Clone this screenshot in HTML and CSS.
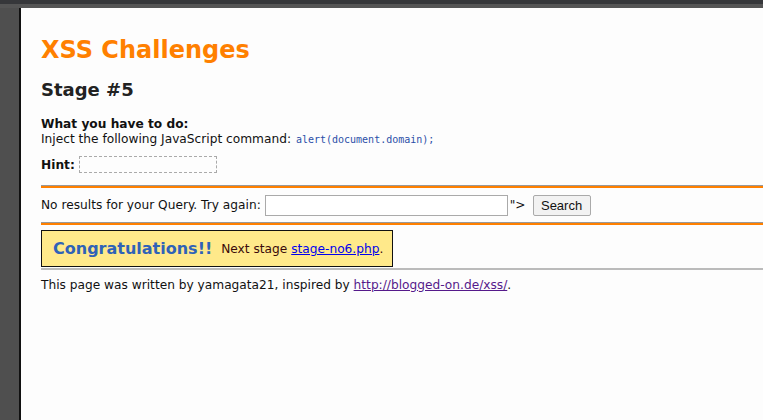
FILE: index.html
```html
<!DOCTYPE html>
<html>
<head>
<meta charset="utf-8">
<link rel="stylesheet" href="styles.css">
</head>
<body>
<div class="chrome-top"></div>
<div class="frame">
  <div class="side"></div>
  <div class="page">
    <h1 class="title">XSS Challenges</h1>
    <h2 class="stage">Stage #5</h2>
    <div class="task">
      <b>What you have to do:</b><br>
      Inject the following JavaScript command: <code class="cmd">alert(document.domain);</code>
    </div>
    <div class="hint"><b>Hint:</b> <span class="hintbox"></span></div>
    <div class="rule-red"></div>
    <form class="query">
      <span>No results for your Query. Try again:</span>
      <input class="qinput" type="text">
      <span class="tail">"&gt;</span>
      <button class="btn" type="button">Search</button>
    </form>
    <div class="rule-red"></div>
    <div class="congrats">
      <span class="big">Congratulations!!</span>
      <span class="next">Next stage <a href="#">stage-no6.php</a>.</span>
    </div>
    <div class="rule-gray"></div>
    <p class="footer">This page was written by yamagata21, inspired by <a href="#" class="visited">http://blogged-on.de/xss/</a>.</p>
  </div>
</div>
</body>
</html>
```

FILE: styles.css
```css
html, body {
  margin: 0;
  padding: 0;
  height: 100%;
}
body {
  background: #4f4f4f;
  font-family: "DejaVu Sans", Verdana, sans-serif;
  font-size: 12.2px;
  color: #111;
  display: flex;
  flex-direction: column;
}
.chrome-top {
  height: 4px;
  background: #36373a;
  border-bottom: 4px solid #555555;
  flex: none;
}
.frame {
  flex: 1;
  display: flex;
}
.side {
  width: 19px;
  background: #4f4f4f;
  border-right: 2px solid #111;
  flex: none;
}
.page {
  flex: 1;
  background: #fdfdfd;
  padding: 27px 0 0 20px;
  overflow: hidden;
}
.title {
  margin: 0;
  font-size: 24px;
  line-height: 30px;
  color: #ff8000;
  font-weight: bold;
}
.stage {
  margin: 13px 0 0;
  font-size: 18px;
  line-height: 24px;
  color: #222;
}
.task {
  margin-top: 15px;
  line-height: 15px;
}
.cmd {
  font-family: "DejaVu Sans Mono", monospace;
  font-size: 10px;
  color: #2b4fa8;
  margin-left: 1px;
}
.hint {
  margin-top: 9px;
  display: flex;
  align-items: center;
  gap: 4px;
  height: 17px;
}
.hintbox {
  display: inline-block;
  width: 136px;
  height: 15px;
  border: 1px dashed #aaa;
}
.rule-red {
  margin-top: 12px;
  height: 2px;
  border-top: 1px solid #999;
  background: #ff8000;
}
.query {
  margin: 6px 0 6px;
  display: flex;
  align-items: center;
  height: 22px;
}
.qinput {
  margin: 0 0 0 4px;
  width: 243px;
  height: 21px;
  box-sizing: border-box;
  border: 1px solid #aaa;
  padding: 0;
}
.tail {
  margin: 0 7px 0 2px;
}
.btn {
  font-family: "Liberation Sans", Arial, sans-serif;
  font-size: 13px;
  height: 21px;
  width: 58px;
  padding: 0;
  border: 1px solid #aaa;
  background: #f2f2f2;
  color: #111;
  border-radius: 2px;
}
.query + .rule-red {
  margin-top: 0;
}
.congrats {
  margin-top: 5px;
  background: #ffe98a;
  border: 1px solid #111;
  display: flex;
  align-items: center;
  padding-left: 11px;
  box-sizing: border-box;
  width: 352px;
  height: 37px;
  white-space: nowrap;
}
.big {
  font-size: 16px;
  font-weight: bold;
  color: #2f62b8;
  margin-right: 9px;
}
.next {
  color: #3a0a0a;
}
a {
  color: #0000ee;
}
a.visited {
  color: #551a8b;
}
.rule-gray {
  margin-top: 1px;
  height: 2px;
  background: #bbb;
}
.footer {
  margin: 7px 0 0;
  line-height: 16px;
}
```
